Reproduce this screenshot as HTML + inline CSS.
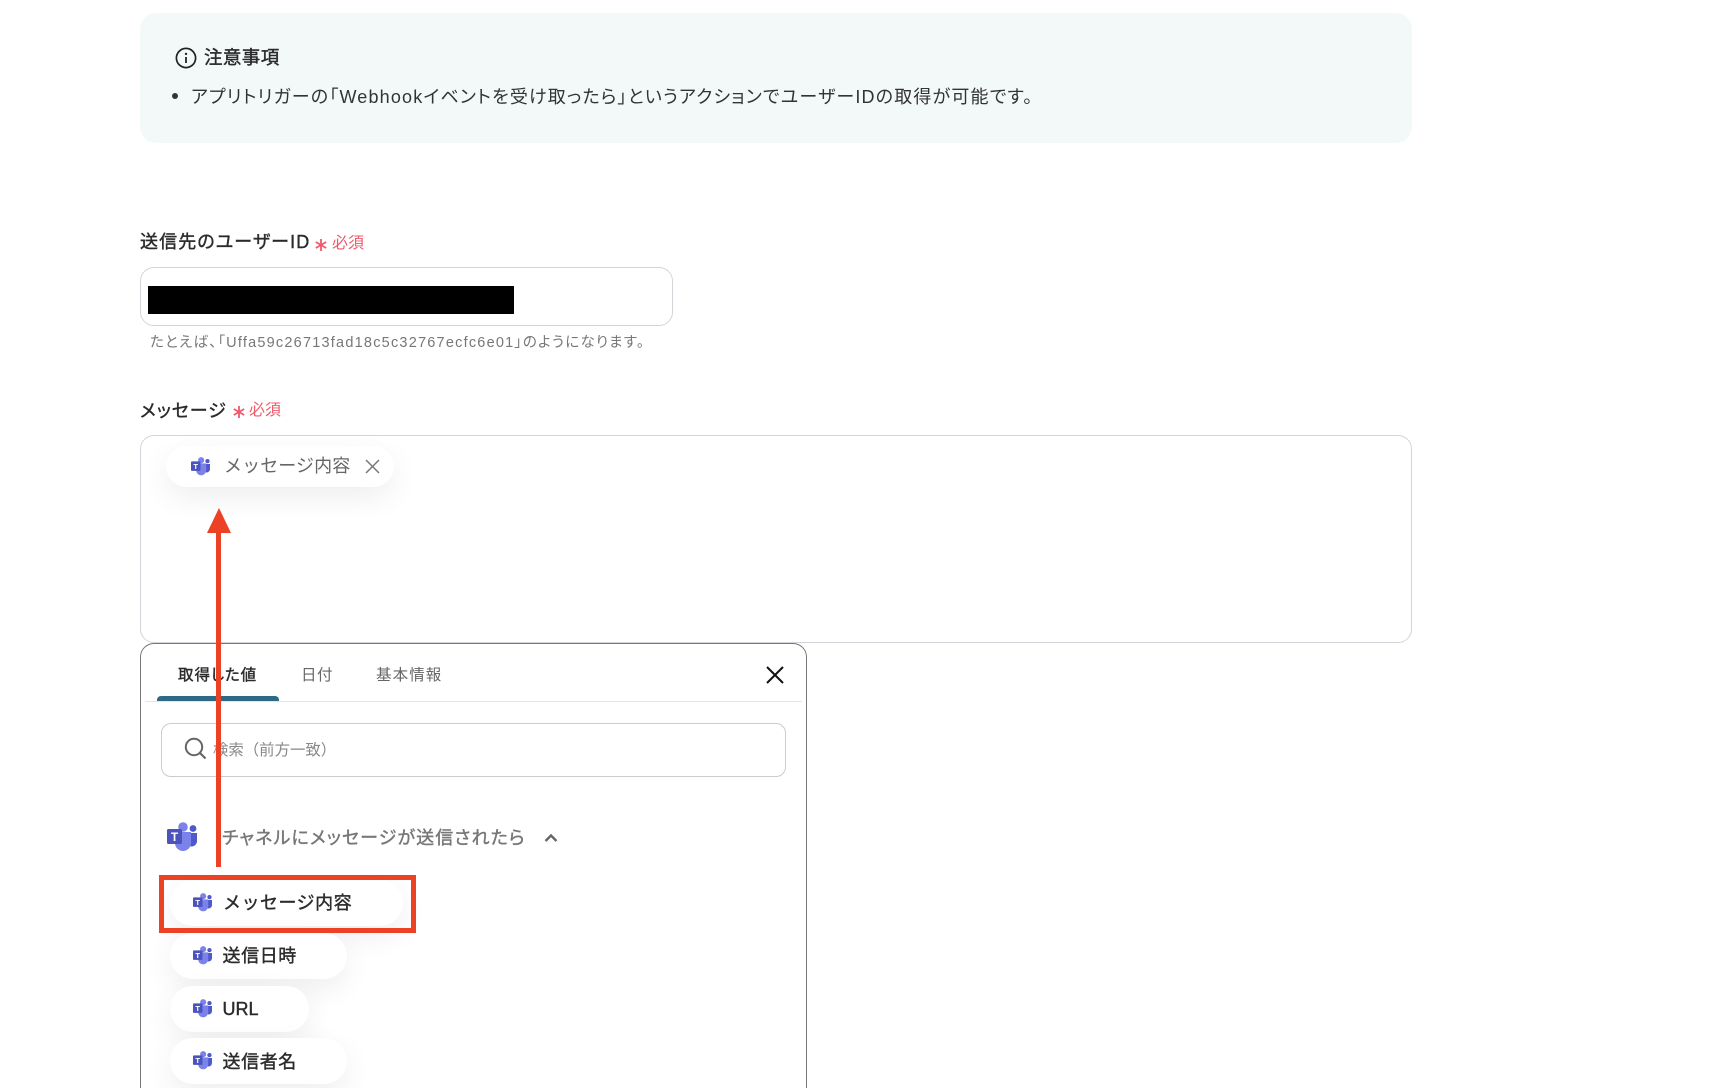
<!DOCTYPE html>
<html lang="ja">
<head>
<meta charset="utf-8">
<style>
html,body{margin:0;padding:0;background:#fff;width:1716px;height:1088px;overflow:hidden;}
#p{width:1716px;height:1088px;overflow:hidden;position:relative;background:#fff;font-family:"Liberation Sans","Noto Sans CJK JP",sans-serif;font-feature-settings:"palt";color:#333;}
.a{position:absolute;white-space:nowrap;}
.t{line-height:24px;height:24px;}
.b{font-weight:400;-webkit-text-stroke:.4px currentColor;}
.np{font-feature-settings:normal;}
.chip{position:absolute;background:#fff;border-radius:24px;box-shadow:0 10px 30px rgba(0,0,0,.07);}
.req{color:#ef5a6b;font-size:16px;}
svg{position:absolute;overflow:visible;}
</style>
</head>
<body>
<div id="p">
<div class="a" style="left:140px;top:12.500px;width:1272px;height:130px;background:#f3f9f9;border-radius:16px;"></div>
<svg style="left:174.500px;top:47px" width="22" height="22" viewBox="0 0 22 22" fill="none"><circle cx="11" cy="11" r="9.600" stroke="#222" stroke-width="1.700"/><circle cx="11" cy="6.900" r="1.200" fill="#222"/><path d="M11 10v6" stroke="#222" stroke-width="1.800"/></svg>
<div class="a t b" style="left:204px;top:46px;font-size:18.500px;letter-spacing:.4px;color:#2b2b2b;">注意事項</div>
<div class="a" style="left:172px;top:93px;width:6px;height:6px;border-radius:50%;background:#333;"></div>
<div class="a t" style="left:191px;top:85px;font-size:18px;letter-spacing:1.170px;color:#333;">アプリトリガーの「Webhookイベントを受け取ったら」というアクションでユーザーIDの取得が可能です。</div>

<div class="a t b" style="left:140px;top:230px;font-size:18px;letter-spacing:1.100px;color:#2b2b2b;">送信先のユーザーID</div>
<svg style="left:315px;top:239px" width="12" height="12" viewBox="0 0 12 12" fill="none"><path d="M6 0v12M.8 3l10.400 6M11.200 3L.8 9" stroke="#ef5a6b" stroke-width="1.800"/></svg>
<div class="a t req" style="left:332px;top:232px;">必須</div>
<div class="a" style="left:140px;top:267px;width:531px;height:57px;border:1px solid #d2d5da;border-radius:14px;"></div>
<div class="a" style="left:148px;top:286px;width:366px;height:28px;background:#000;"></div>
<div class="a t" style="left:150px;top:331px;font-size:14.500px;letter-spacing:1.220px;color:#777;">たとえば、「Uffa59c26713fad18c5c32767ecfc6e01」のようになります。</div>

<div class="a t b" style="left:140px;top:398.500px;font-size:18px;letter-spacing:.95px;color:#2b2b2b;">メッセージ</div>
<svg style="left:232.500px;top:405.500px" width="12" height="12" viewBox="0 0 12 12" fill="none"><path d="M6 0v12M.8 3l10.400 6M11.200 3L.8 9" stroke="#ef5a6b" stroke-width="1.800"/></svg>
<div class="a t req" style="left:249px;top:399px;">必須</div>
<div class="a" style="left:140px;top:435px;width:1270px;height:206px;border:1px solid #d2d5da;border-radius:14px;"></div>

<div class="chip" style="left:166px;top:446px;width:228px;height:41px;"></div>
<svg style="left:191px;top:457px" width="19" height="19" viewBox="0 0 30 30"><circle cx="26" cy="6.500" r="3.400" fill="#5059c9"/><path d="M19 11h11v8a5.500 5.500 0 0 1-11 0z" fill="#5059c9"/><circle cx="16" cy="5" r="4.800" fill="#7b83eb"/><path d="M8 10h16v11a8 8 0 0 1-16 0z" fill="#7b83eb"/><rect x="0" y="7" width="15" height="15" rx="1.500" fill="#4b53bc"/><text x="7.500" y="19" text-anchor="middle" font-size="12" font-weight="700" fill="#fff" font-family="Liberation Sans">T</text></svg>
<div class="a t np" style="left:224px;top:454px;font-size:18px;letter-spacing:.1px;color:#666;">メッセージ内容</div>
<svg style="left:365px;top:459px" width="15" height="15" viewBox="0 0 15 15" fill="none"><path d="M1 1l13 13M14 1L1 14" stroke="#777" stroke-width="1.500"/></svg>

<div class="a" style="left:140px;top:643px;width:665px;height:460px;border:1.500px solid #777;border-radius:14px;background:#fff;"></div>
<div class="a t b" style="left:178px;top:663.500px;font-size:15.500px;letter-spacing:.95px;color:#2b2b2b;">取得した値</div>
<div class="a t" style="left:301px;top:663.500px;font-size:15.500px;letter-spacing:.5px;color:#666;">日付</div>
<div class="a t" style="left:376px;top:663.500px;font-size:15.500px;letter-spacing:1.100px;color:#666;">基本情報</div>
<div class="a" style="left:145px;top:701px;width:657px;height:1px;background:#e5e5e5;"></div>
<div class="a" style="left:157px;top:695.500px;width:122px;height:5.500px;background:#2e6a85;border-radius:4px 4px 0 0;"></div>
<svg style="left:766px;top:666px" width="18" height="18" viewBox="0 0 18 18" fill="none"><path d="M1 1l16 16M17 1L1 17" stroke="#111" stroke-width="2"/></svg>
<div class="a" style="left:161px;top:723px;width:623px;height:52px;border:1px solid #ccc;border-radius:10px;"></div>
<svg style="left:184px;top:737px" width="23" height="23" viewBox="0 0 23 23" fill="none"><circle cx="10" cy="10" r="8.200" stroke="#666" stroke-width="2"/><path d="M16 16l5.500 5.500" stroke="#666" stroke-width="2.200"/></svg>
<div class="a t np" style="left:213px;top:738.500px;font-size:15.400px;color:#888;">検索（前方一致）</div>

<svg style="left:167px;top:822px" width="30" height="30" viewBox="0 0 30 30"><circle cx="26" cy="6.500" r="3.400" fill="#5059c9"/><path d="M19 11h11v8a5.500 5.500 0 0 1-11 0z" fill="#5059c9"/><circle cx="16" cy="5" r="4.800" fill="#7b83eb"/><path d="M8 10h16v11a8 8 0 0 1-16 0z" fill="#7b83eb"/><rect x="0" y="7" width="15" height="15" rx="1.500" fill="#4b53bc"/><text x="7.500" y="19" text-anchor="middle" font-size="12" font-weight="700" fill="#fff" font-family="Liberation Sans">T</text></svg>
<div class="a t b" style="left:222px;top:825.500px;font-size:18px;letter-spacing:1.100px;color:#777;">チャネルにメッセージが送信されたら</div>
<svg style="left:544px;top:833px" width="14" height="10" viewBox="0 0 14 10" fill="none"><path d="M1.500 8L7 2.500 12.500 8" stroke="#666" stroke-width="2.400"/></svg>

<div class="chip" style="left:170px;top:880px;width:233px;height:46px;"></div>
<svg style="left:193px;top:893px" width="19" height="19" viewBox="0 0 30 30"><circle cx="26" cy="6.500" r="3.400" fill="#5059c9"/><path d="M19 11h11v8a5.500 5.500 0 0 1-11 0z" fill="#5059c9"/><circle cx="16" cy="5" r="4.800" fill="#7b83eb"/><path d="M8 10h16v11a8 8 0 0 1-16 0z" fill="#7b83eb"/><rect x="0" y="7" width="15" height="15" rx="1.500" fill="#4b53bc"/><text x="7.500" y="19" text-anchor="middle" font-size="12" font-weight="700" fill="#fff" font-family="Liberation Sans">T</text></svg>
<div class="a t b np" style="left:223px;top:891px;font-size:18px;letter-spacing:.5px;color:#2b2b2b;">メッセージ内容</div>

<div class="chip" style="left:170px;top:933px;width:177px;height:46px;"></div>
<svg style="left:193px;top:946px" width="19" height="19" viewBox="0 0 30 30"><circle cx="26" cy="6.500" r="3.400" fill="#5059c9"/><path d="M19 11h11v8a5.500 5.500 0 0 1-11 0z" fill="#5059c9"/><circle cx="16" cy="5" r="4.800" fill="#7b83eb"/><path d="M8 10h16v11a8 8 0 0 1-16 0z" fill="#7b83eb"/><rect x="0" y="7" width="15" height="15" rx="1.500" fill="#4b53bc"/><text x="7.500" y="19" text-anchor="middle" font-size="12" font-weight="700" fill="#fff" font-family="Liberation Sans">T</text></svg>
<div class="a t b np" style="left:222.500px;top:944px;font-size:18px;letter-spacing:.6px;color:#2b2b2b;">送信日時</div>

<div class="chip" style="left:170px;top:986px;width:139px;height:46px;"></div>
<svg style="left:193px;top:999px" width="19" height="19" viewBox="0 0 30 30"><circle cx="26" cy="6.500" r="3.400" fill="#5059c9"/><path d="M19 11h11v8a5.500 5.500 0 0 1-11 0z" fill="#5059c9"/><circle cx="16" cy="5" r="4.800" fill="#7b83eb"/><path d="M8 10h16v11a8 8 0 0 1-16 0z" fill="#7b83eb"/><rect x="0" y="7" width="15" height="15" rx="1.500" fill="#4b53bc"/><text x="7.500" y="19" text-anchor="middle" font-size="12" font-weight="700" fill="#fff" font-family="Liberation Sans">T</text></svg>
<div class="a t b" style="left:222.500px;top:997px;font-size:18px;color:#2b2b2b;">URL</div>

<div class="chip" style="left:170px;top:1038px;width:177px;height:46px;"></div>
<svg style="left:193px;top:1051px" width="19" height="19" viewBox="0 0 30 30"><circle cx="26" cy="6.500" r="3.400" fill="#5059c9"/><path d="M19 11h11v8a5.500 5.500 0 0 1-11 0z" fill="#5059c9"/><circle cx="16" cy="5" r="4.800" fill="#7b83eb"/><path d="M8 10h16v11a8 8 0 0 1-16 0z" fill="#7b83eb"/><rect x="0" y="7" width="15" height="15" rx="1.500" fill="#4b53bc"/><text x="7.500" y="19" text-anchor="middle" font-size="12" font-weight="700" fill="#fff" font-family="Liberation Sans">T</text></svg>
<div class="a t b np" style="left:222.500px;top:1050px;font-size:18px;letter-spacing:.6px;color:#2b2b2b;">送信者名</div>

<div class="a" style="left:159px;top:875px;width:247px;height:48px;border:5px solid #ec4124;"></div>
<svg style="left:207px;top:508px" width="24" height="360" viewBox="0 0 24 360"><path d="M12 0L24 25H0z" fill="#ec4124"/><rect x="9" y="24" width="5" height="335" fill="#ec4124"/></svg>
</div>
</body>
</html>
